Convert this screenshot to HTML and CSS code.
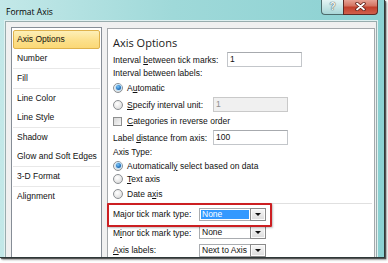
FILE: index.html
```html
<!DOCTYPE html>
<html lang="en">

<head>
  <meta charset="UTF-8">
  <title>Format Axis</title>
  <link rel="stylesheet" href="styles.css">
</head>

<body>
  <div class="window">
    <div class="titlebar">
      <span class="title">Format Axis</span>
      <div class="caption-btns">
        <span class="btn-help">?</span>
        <span class="btn-close">
          <svg width="11" height="9" viewBox="0 0 11 9">
            <path d="M2 1.5 L9 7.5 M9 1.5 L2 7.5" stroke="#5a1a14" stroke-width="3.4" stroke-linecap="round" />
            <path d="M2 1.5 L9 7.5 M9 1.5 L2 7.5" stroke="#fff" stroke-width="1.8" stroke-linecap="round" />
          </svg>
        </span>
      </div>
    </div>

    <div class="client">
      <ul class="nav">
        <li class="selected">Axis Options</li>
        <li class="end">Number</li>
        <li class="end">Fill</li>
        <li>Line Color</li>
        <li class="end">Line Style</li>
        <li>Shadow</li>
        <li class="end">Glow and Soft Edges</li>
        <li class="end">3-D Format</li>
        <li>Alignment</li>
      </ul>

      <div class="pane">
        <h1>Axis Options</h1>

        <div class="row row-tick">
          <span class="lbl lbl-tick">Interval <u>b</u>etween tick marks:</span>
          <span class="field">1</span>
        </div>
        <div class="row row-caption">Interval between labels:</div>
        <div class="row row-auto">
          <span class="radio checked"></span><span>A<u>u</u>tomatic</span>
        </div>
        <div class="row row-specify">
          <span class="choice"><span class="radio"></span><span><u>S</u>pecify interval unit:</span></span>
          <span class="field disabled">1</span>
        </div>
        <div class="row row-reverse">
          <span class="check"></span><span><u>C</u>ategories in reverse order</span>
        </div>
        <div class="row row-distance">
          <span class="lbl lbl-distance">Label <u>d</u>istance from axis:</span>
          <span class="field">100</span>
        </div>
        <div class="row row-type">Axis Type:</div>
        <div class="row row-select">
          <span class="radio checked"></span><span>Automaticall<u>y</u> select based on data</span>
        </div>
        <div class="row row-text">
          <span class="radio"></span><span><u>T</u>ext axis</span>
        </div>
        <div class="row row-date">
          <span class="radio"></span><span>Date a<u>x</u>is</span>
        </div>

        <div class="divider"></div>

        <div class="row row-major">
          <span class="lbl lbl-combo">Ma<u>j</u>or tick mark type:</span>
          <span class="combo"><span class="value hl">None</span><span class="arrow"></span></span>
          <span class="callout"></span>
        </div>
        <div class="row row-minor">
          <span class="lbl lbl-combo">M<u>i</u>nor tick mark type:</span>
          <span class="combo"><span class="value">None</span><span class="arrow"></span></span>
        </div>
        <div class="row row-labels">
          <span class="lbl lbl-combo"><u>A</u>xis labels:</span>
          <span class="combo"><span class="value">Next to Axis</span><span class="arrow"></span></span>
        </div>
      </div>
    </div>
  </div>
</body>

</html>
```

FILE: styles.css
```css
* {
  box-sizing: border-box;
}

html,
body {
  margin: 0;
  padding: 0;
  width: 388px;
  height: 263px;
  overflow: hidden;
  background: #fff;
}

body {
  font-family: Tahoma, 'Liberation Sans', Arial, sans-serif;
  font-size: 8.5px;
  color: #111;
}

u {
  text-underline-offset: 1px;
}

.window {
  width: 385px;
  height: 258px;
  display: flex;
  flex-direction: column;
  background: linear-gradient(to right, #c3e8e8 0%, #9fd9d9 45%, #8bd1d2 100%);
  border-right: 1px solid #2e3838;
  border-bottom: 1px solid #2e3838;
  box-shadow: 1px 1px 1px rgba(0, 0, 0, 0.55), 2px 2px 2px rgba(0, 0, 0, 0.3);
  overflow: hidden;
}

.titlebar {
  height: 21px;
  flex: none;
  display: flex;
  justify-content: space-between;
  align-items: flex-start;
  padding-right: 6px;
}

.title {
  font-family: 'Open Sans', 'Liberation Sans', sans-serif;
  font-size: 8.5px;
  line-height: 20px;
  padding: 2px 0 0 6px;
  color: #000;
}

.caption-btns {
  display: flex;
  margin-top: -1px;
}

.btn-help,
.btn-close {
  height: 16px;
  display: flex;
  align-items: center;
  justify-content: center;
  border: 1px solid #4d6b6c;
  border-top: none;
}

.btn-help {
  width: 22px;
  border-right: none;
  border-radius: 0 0 0 4px;
  background: linear-gradient(#e9f6f6, #c9e6e6 50%, #a9d6d7);
  font-family: 'Liberation Sans', sans-serif;
  font-weight: bold;
  font-size: 10px;
  color: #f4f8f8;
  text-shadow: 0 0 1px #3d5050, 0 0 1px #3d5050;
}

.btn-close {
  width: 35px;
  border-color: #5e2a24;
  border-radius: 0 0 4px 0;
  background: linear-gradient(#e9a99c, #d47563 45%, #c2402c 55%, #d0604c);
}

.client {
  flex: 1;
  display: flex;
  gap: 5px;
  margin: 0 7px 0 5px;
  padding: 5px 1px 0 5px;
  border: 1px solid #98acad;
  border-bottom: none;
  background: #f0f0f0;
  box-shadow: 0 0 0 1px #dff1f1;
}

.nav {
  width: 91px;
  flex: none;
  margin: 0;
  padding: 2px 1px;
  list-style: none;
  background: #fff;
  border: 1px solid #868d96;
  border-bottom: none;
}

.nav li {
  line-height: 19px;
  padding-left: 4px;
  white-space: nowrap;
}

.nav li.end {
  border-bottom: 1px solid #e8e8e8;
}

.nav li.selected {
  padding-left: 3px;
  line-height: 17px;
  border: 1px solid #dfb24c;
  border-radius: 2px;
  background: linear-gradient(#fdefb8, #fce08c 55%, #fbd876);
}

.pane {
  width: 268px;
  flex: none;
  margin-top: 1px;
  padding: 6px 2px 0 5px;
  background: #fff;
  border: 1px solid #a4a8ab;
  border-bottom: none;
}

.pane h1 {
  margin: 0;
  font-family: 'Open Sans', 'Liberation Sans', sans-serif;
  font-size: 11px;
  font-weight: normal;
  line-height: 16px;
  color: #1a1a1a;
}

.row {
  display: flex;
  align-items: center;
  white-space: nowrap;
}

.row-tick { height: 15px; margin-top: 1px; }
.row-caption { height: 11px; }
.row-auto { height: 19px; }
.row-specify { height: 15px; }
.row-reverse { height: 18px; }
.row-distance { height: 15px; }
.row-type { height: 14px; }
.row-select { height: 13px; }
.row-text { height: 14px; }
.row-date { height: 15px; }
.row-major { height: 20px; position: relative; }
.row-minor { height: 13px; margin-top: 2px; }
.row-labels { height: 14px; margin-top: 4px; }

.lbl {
  flex: none;
}

.lbl-tick { width: 114px; }
.lbl-distance { width: 100px; }
.lbl-combo { width: 86px; }

.choice {
  width: 100px;
  flex: none;
  display: flex;
  align-items: center;
}

.radio {
  width: 10px;
  height: 10px;
  flex: none;
  margin-right: 4px;
  border-radius: 50%;
  border: 1px solid #8b8f93;
  background: radial-gradient(circle at 40% 35%, #fff 0%, #ececec 45%, #d2d2d2 100%);
  display: flex;
  align-items: center;
  justify-content: center;
}

.radio.checked::after {
  content: '';
  width: 5px;
  height: 5px;
  border-radius: 50%;
  background: radial-gradient(circle at 40% 35%, #7cc6f6 0%, #2a79c4 55%, #15487f 100%);
  box-shadow: 0 0 0 1px #bfe1f7;
}

.check {
  width: 9px;
  height: 9px;
  flex: none;
  margin-right: 5px;
  border: 1px solid #8e8f8f;
  background: linear-gradient(135deg, #d7d7d7, #f7f7f7);
}

.field {
  width: 75px;
  height: 15px;
  flex: none;
  padding-left: 2px;
  line-height: 13px;
  background: #fff;
  border: 1px solid #c3c6ca;
  border-top-color: #a7aaae;
}

.field.disabled {
  background: #f0f0f0;
  color: #8d8d8d;
  border-color: #c9c9c9;
}

.divider {
  margin-top: 2px;
  height: 1px;
  background: #e0e0e0;
}

.combo {
  width: 67px;
  height: 13px;
  flex: none;
  display: flex;
  background: #fff;
  border: 1px solid #a9acb0;
}

.combo .value {
  flex: 1;
  padding-left: 2px;
  line-height: 11px;
}

.combo .value.hl {
  margin: 1px 1px 1px 1px;
  line-height: 9px;
  padding-left: 1px;
  background: #3399ff;
  color: #fff;
}

.combo .arrow {
  width: 16px;
  flex: none;
  margin: -1px -1px -1px 0;
  display: flex;
  align-items: center;
  justify-content: center;
  border: 1px solid #8a8a8a;
  background: linear-gradient(#f7f7f7, #dcdcdc);
  box-shadow: inset 0 0 0 1px #fbfbfb;
}

.combo .arrow::after {
  content: '';
  border-left: 3px solid transparent;
  border-right: 3px solid transparent;
  border-top: 3px solid #111;
}

.callout {
  position: absolute;
  left: -6px;
  top: -1px;
  width: 165px;
  height: 24px;
  border: 2px solid #cc1f22;
  border-radius: 1px;
  box-shadow: 1px 1px 2px rgba(0, 0, 0, 0.25);
}
```
